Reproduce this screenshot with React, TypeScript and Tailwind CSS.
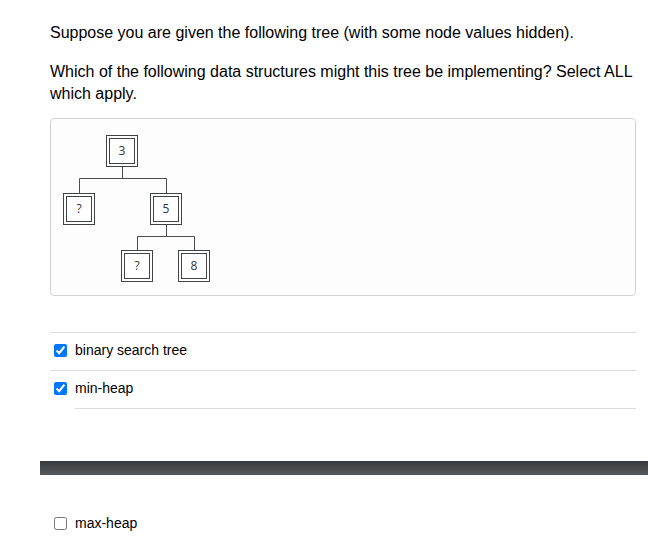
import React from "react";

type Node = { label: string; x: number; y: number };

const nodes: Node[] = [
  { label: "3", x: 55, y: 16 },
  { label: "?", x: 12, y: 74 },
  { label: "5", x: 99, y: 74 },
  { label: "?", x: 70, y: 131 },
  { label: "8", x: 127, y: 131 },
];

function TreeNode({ node }: { node: Node }) {
  return (
    <div
      className="absolute w-[32px] h-[32px] border-[4px] border-double border-[#3f4347] bg-white flex items-center justify-center text-[12px] text-[#333] [font-family:'Open_Sans',sans-serif]"
      style={{ left: node.x, top: node.y }}
    >
      {node.label}
    </div>
  );
}

function Tree() {
  return (
    <div className="relative h-[178px] w-[586px] rounded-[4px] border border-[#cfd3d6] bg-[#fdfdfd]">
      {/* connectors */}
      <svg className="absolute left-0 top-0" width="240" height="170" fill="none" stroke="#4a4e52" strokeWidth="1">
        <path d="M71.5 48 V59.5 M28.5 74 V59.5 H115.5 V74" />
        <path d="M115.5 106 V117.5 M86.5 131 V117.5 H143.5 V131" />
      </svg>
      {nodes.map((n, i) => (
        <TreeNode key={i} node={n} />
      ))}
    </div>
  );
}

function Option({ label, checked, line = "full" }: { label: string; checked: boolean; line?: "full" | "inset" | "none" }) {
  return (
    <div className="relative flex h-[38px] items-center pb-[3px] pl-[4px]">
      <input type="checkbox" defaultChecked={checked} className="m-0 h-[13px] w-[13px]" />
      <span className="ml-[8px] text-[14px] text-black">{label}</span>
      {line === "full" && <div className="absolute bottom-0 left-0 right-0 h-px bg-[#dcdcdc]" />}
      {line === "inset" && <div className="absolute bottom-0 left-[25px] right-0 h-px bg-[#dcdcdc]" />}
    </div>
  );
}

export default function App() {
  return (
    <div className="min-h-[551px] w-[648px] overflow-hidden bg-white [font-family:'Liberation_Sans',Arial,sans-serif] text-black">
      <div className="pl-[50px] pt-[22px]">
        <div className="w-[590px] text-[16px] leading-[22px]">
          <p>Suppose you are given the following tree (with some node values hidden).</p>
          <p className="mt-[17px]">Which of the following data structures might this tree be implementing? Select ALL which apply.</p>
        </div>
        <div className="mt-[13px]">
          <Tree />
        </div>
        <div className="mt-[36px] w-[586px]">
          <div className="h-px bg-[#dcdcdc]" />
          <Option label="binary search tree" checked line="full" />
          <Option label="min-heap" checked line="inset" />
        </div>
      </div>
      <div className="ml-[40px] mt-[52px] h-[14px] bg-gradient-to-b from-[#383a3c] to-[#56595c]" />
      <div className="pl-[50px] pt-[31px]">
        <Option label="max-heap" checked={false} line="none" />
      </div>
    </div>
  );
}
